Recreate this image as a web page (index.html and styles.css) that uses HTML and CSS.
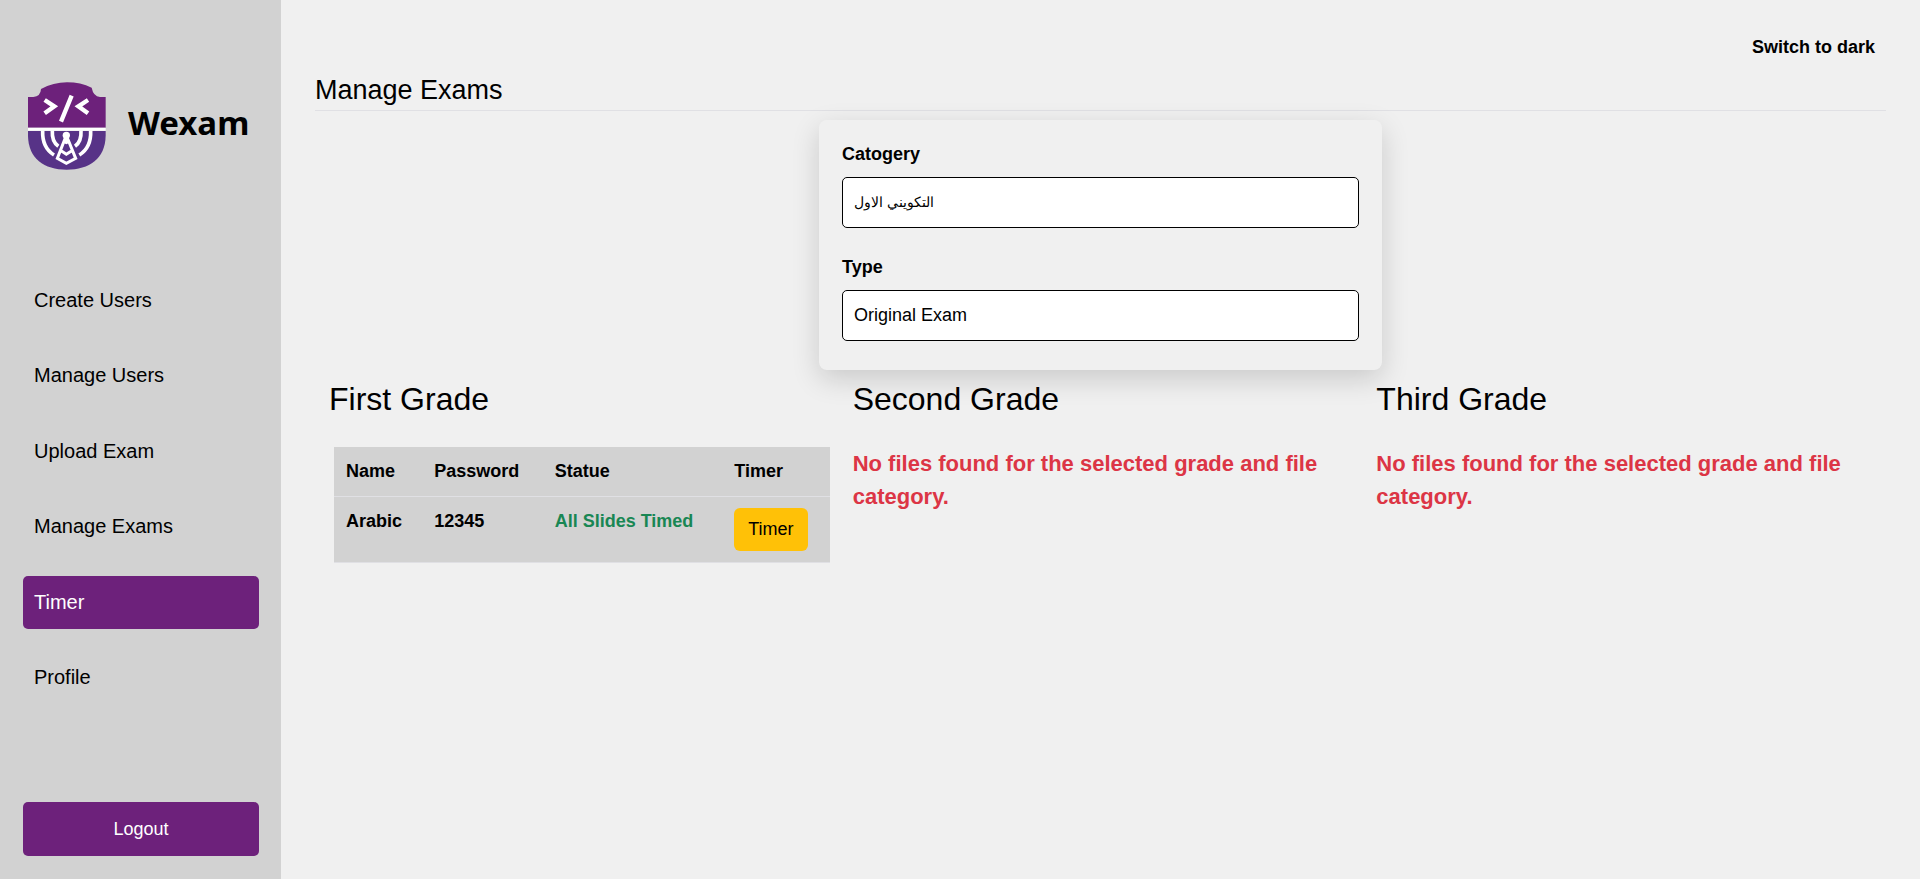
FILE: index.html
```html
<!DOCTYPE html>
<html lang="en">
<head>
<meta charset="utf-8">
<title>Wexam - Manage Exams</title>
<link rel="stylesheet" href="styles.css">
</head>
<body>
<div class="layout">
  <aside class="sidebar">
    <div class="brand">
      <svg class="brand-logo" viewBox="24 21 234 264" aria-hidden="true">
        <path fill="#6d217b" d="M24 158V66H40Q62 64 63 42Q100 22 141 22Q182 22 215 38Q220 64 240 66H257V158Z"/>
        <path fill="#573387" d="M24 168H257V182C256 250 208 284 140 284C72 284 25 250 24 182Z"/>
        <path fill="#fff" d="M24 158H257V167H24Z"/>
        <g fill="none" stroke="#fff">
          <path stroke-width="13" d="M74 75L103 94L74 115M204 75L175 94L204 115M155 62L123 140"/>
          <path stroke-width="11" d="M68 167Q66 218 102 240M212 167Q214 218 178 240M97 167Q95 200 115 214M183 167Q185 200 165 214"/>
          <path stroke-width="9" d="M137 186L112 250L139 265L167 250L141 186M121 226L139 238L158 226"/>
        </g>
        <circle cx="139" cy="181" r="11" fill="#fff"/>
        <path fill="#fff" d="M134 188H144L147 204L139 208L131 204Z"/>
      </svg>
      <span class="brand-name">Wexam</span>
    </div>
    <nav class="nav">
      <a class="nav-link" href="#">Create Users</a>
      <a class="nav-link" href="#">Manage Users</a>
      <a class="nav-link" href="#">Upload Exam</a>
      <a class="nav-link" href="#">Manage Exams</a>
      <a class="nav-link active" href="#">Timer</a>
      <a class="nav-link" href="#">Profile</a>
    </nav>
    <button class="logout" type="button">Logout</button>
  </aside>
  <main class="main">
    <div class="topbar"><button class="theme-switch" type="button">Switch to dark</button></div>
    <h1 class="page-title">Manage Exams</h1>
    <form class="filter-card">
      <div class="field">
        <label class="label" for="category">Catogery</label>
        <select class="select arabic" id="category"><option>التكويني الاول</option></select>
      </div>
      <div class="field">
        <label class="label" for="type">Type</label>
        <select class="select" id="type"><option>Original Exam</option></select>
      </div>
    </form>
    <div class="grades">
      <section class="grade">
        <h2 class="grade-title">First Grade</h2>
        <table class="exam-table">
          <thead>
            <tr><th>Name</th><th>Password</th><th>Statue</th><th>Timer</th></tr>
          </thead>
          <tbody>
            <tr>
              <td>Arabic</td><td>12345</td><td class="status">All Slides Timed</td>
              <td><button class="timer-btn" type="button">Timer</button></td>
            </tr>
          </tbody>
        </table>
      </section>
      <section class="grade">
        <h2 class="grade-title">Second Grade</h2>
        <p class="empty">No files found for the selected grade and file category.</p>
      </section>
      <section class="grade">
        <h2 class="grade-title">Third Grade</h2>
        <p class="empty">No files found for the selected grade and file category.</p>
      </section>
    </div>
  </main>
</div>
</body>
</html>
```
FILE: styles.css
```css
* {
  box-sizing: border-box;
}

body {
  margin: 0;
  background: #f0f0f0;
  color: #000;
  font: 18px/27px "Liberation Sans", Arial, sans-serif;
}

button,
select {
  font: inherit;
  color: inherit;
}

.layout {
  display: flex;
  min-height: 100vh;
}

.sidebar {
  flex: 0 0 281px;
  display: flex;
  flex-direction: column;
  padding: 82px 22px 23px 23px;
  background: #d2d2d2;
}

.brand {
  display: flex;
  align-items: center;
  gap: 22px;
  padding-left: 5px;
  margin-bottom: 104px;
}

.brand-logo {
  width: 78px;
  height: 88px;
}

.brand-name {
  padding-bottom: 6px;
  font: bold 33px/40px "Noto Sans", sans-serif;
}

.nav {
  flex: 1;
  display: flex;
  flex-direction: column;
  justify-content: space-between;
  margin-bottom: 98px;
}

.nav-link {
  padding: 11px;
  border-radius: 5px;
  color: #000;
  font-size: 20px;
  line-height: 31px;
  text-decoration: none;
}

.nav-link.active {
  background: #6d217b;
  color: #fff;
}

.logout {
  padding: 13px;
  border: 0;
  border-radius: 5px;
  background: #6d217b;
  color: #fff;
  line-height: 28px;
}

.main {
  flex: 1;
  min-width: 0;
  padding: 34px 34px 24px;
}

.topbar {
  display: flex;
  justify-content: flex-end;
  padding-right: 11px;
}

.theme-switch {
  padding: 0;
  border: 0;
  background: none;
  font-weight: bold;
}

.page-title {
  margin: 12px 0 9px;
  padding-bottom: 3px;
  border-bottom: 1px solid #e0e0e4;
  font-size: 27px;
  font-weight: normal;
  line-height: 34px;
}

.filter-card {
  width: 563px;
  max-width: 100%;
  margin: 0 auto;
  padding: 21px 23px 29px;
  border-radius: 8px;
  box-shadow: 0 9px 28px rgba(0, 0, 0, 0.16);
}

.field + .field {
  margin-top: 26px;
}

.label {
  display: block;
  margin-bottom: 9px;
  font-weight: bold;
}

.select {
  display: block;
  width: 100%;
  height: 51px;
  padding: 0 11px;
  border: 1px solid #000;
  border-radius: 5px;
  background: #fff;
  appearance: none;
}

.select.arabic {
  font-size: 14px;
}

.grades {
  display: grid;
  grid-template-columns: repeat(3, 1fr);
}

.grade {
  padding: 9px 14px;
}

.grade-title {
  margin: 0 0 28px;
  font-size: 32px;
  font-weight: normal;
  line-height: 40px;
}

.exam-table {
  width: 100%;
  margin-left: 5px;
  border-collapse: collapse;
  background: #d2d2d2;
  font-weight: bold;
}

.exam-table th,
.exam-table td {
  padding: 11px 12px;
  border-bottom: 1px solid #e0e0e4;
  text-align: left;
  vertical-align: top;
}

.exam-table .status {
  color: #198754;
}

.timer-btn {
  display: block;
  padding: 8px 14px;
  border: 0;
  border-radius: 6px;
  background: #ffc107;
  font-weight: normal;
}

.empty {
  margin: 0;
  color: #dc3545;
  font-size: 22px;
  font-weight: bold;
  line-height: 33px;
}
```
